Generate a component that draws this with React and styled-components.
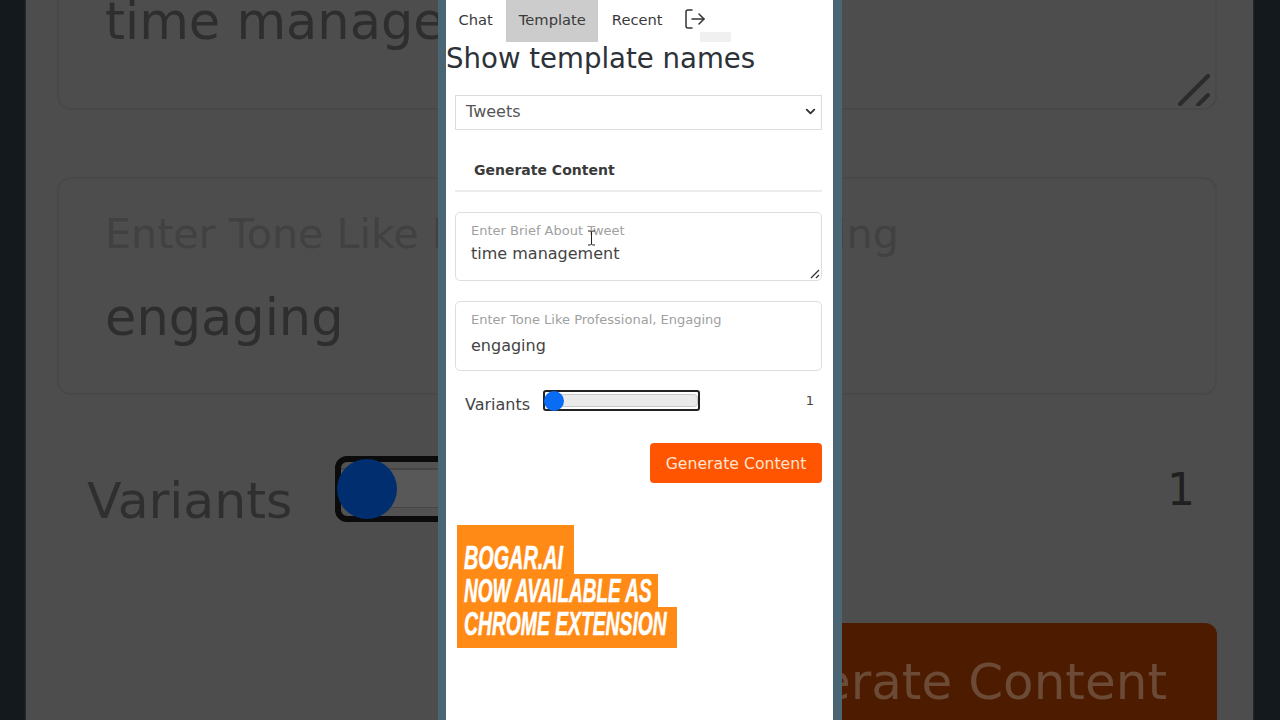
import React from 'react'
import styled, { createGlobalStyle } from 'styled-components'
import { ChevronDown, LogOut } from 'lucide-react'

const GlobalStyle = createGlobalStyle`
  html, body {
    margin: 0;
    height: 100%;
    background: #13191c;
    font-family: "DejaVu Sans", Inter, sans-serif;
  }
  * { box-sizing: border-box; }
`

const App = () => {
  return (
    <Screen>
      <GlobalStyle />
      <Backdrop>
        <GhostCard $top>
          <GhostValue $first>time management</GhostValue>
          <GhostGrip width="32" height="32" viewBox="0 0 32 32">
            <path d="M2 30 L30 2" />
            <path d="M20 31 L30 21" />
          </GhostGrip>
        </GhostCard>
        <GhostCard>
          <GhostLabel>Enter Tone Like Professional, Engaging</GhostLabel>
          <GhostValue>engaging</GhostValue>
        </GhostCard>
        <GhostRow>
          <GhostVariants>Variants</GhostVariants>
          <GhostSlider>
            <GhostThumb />
          </GhostSlider>
          <GhostCount>1</GhostCount>
        </GhostRow>
        <GhostButton>Generate Content</GhostButton>
      </Backdrop>

      <Phone>
        <Nav>
          <Tab>Chat</Tab>
          <Tab $active>Template</Tab>
          <Tab>Recent</Tab>
          <LogoutIcon size={24} strokeWidth={1.5} />
          <Smudge />
        </Nav>
        <Title>Show template names</Title>
        <Select>
          Tweets
          <ChevronDown size={15} strokeWidth={3} color="#333" />
        </Select>
        <SectionHead>Generate Content</SectionHead>
        <Field $height={69}>
          <FieldLabel>Enter Brief About Tweet</FieldLabel>
          <FieldValue>time management</FieldValue>
          <Grip width="10" height="10" viewBox="0 0 10 10">
            <path d="M1 9 L9 1" />
            <path d="M6 9 L9 6" />
          </Grip>
          <TextCursor width="9" height="16" viewBox="0 0 9 16">
            <path d="M1 1 H3.5 L4.5 2 L5.5 1 H8 M4.5 2 V14 M1 15 H3.5 L4.5 14 L5.5 15 H8" />
          </TextCursor>
        </Field>
        <Field $height={70}>
          <FieldLabel>Enter Tone Like Professional, Engaging</FieldLabel>
          <FieldValue $spaced>engaging</FieldValue>
        </Field>
        <SliderRow>
          <VariantsLabel>Variants</VariantsLabel>
          <Slider>
            <SliderTrack />
            <SliderThumb />
          </Slider>
          <Count>1</Count>
        </SliderRow>
        <Actions>
          <GenerateButton>Generate Content</GenerateButton>
        </Actions>
        <Banner>
          <BannerLine $width={117} $top={16} $scale={0.6}><span>BOGAR.AI</span></BannerLine>
          <BannerLine $width={201} $scale={0.575}><span>NOW AVAILABLE AS</span></BannerLine>
          <BannerLine $width={220} $bottom={8} $scale={0.585}><span>CHROME EXTENSION</span></BannerLine>
        </Banner>
      </Phone>
    </Screen>
  )
}

export default App

const Screen = styled.div`
  position: relative;
  width: 1280px;
  height: 720px;
  overflow: hidden;
  display: flex;
  justify-content: center;
  background: #13191c;
`

/* enlarged, dimmed copy of the form that sits behind the phone */
const Backdrop = styled.div`
  position: absolute;
  top: 0;
  bottom: 0;
  left: 26px;
  right: 27px;
  padding: 0 36px 0 31px;
  background: #4d4d4d;
  box-shadow: 0 0 2px #4d4d4d;
`
const GhostCard = styled.div`
  position: relative;
  height: ${p => (p.$top ? '220px' : '218px')};
  margin-top: ${p => (p.$top ? '-110px' : '67px')};
  padding: ${p => (p.$top ? '108px' : '31px')} 46px 0;
  border: 2px solid #484848;
  border-radius: 14px;
`
const GhostLabel = styled.div`
  font-size: 41.2px;
  line-height: 48px;
  color: #414141;
  white-space: nowrap;
`
const GhostValue = styled.div`
  margin-top: ${p => (p.$first ? '-3px' : '35px')};
  font-size: 51px;
  line-height: 50px;
  color: #2e2e2e;
  white-space: nowrap;
`
const GhostGrip = styled.svg`
  position: absolute;
  right: 5px;
  bottom: 2px;
  fill: none;
  stroke: #2b2b2b;
  stroke-width: 4;
  stroke-linecap: round;
`
const GhostRow = styled.div`
  display: flex;
  align-items: center;
  height: 66px;
  margin-top: 61px;
  padding: 0 22px 0 30px;
`
const GhostVariants = styled.div`
  width: 248px;
  font-size: 50.5px;
  color: #2f2f2f;
  padding-top: 22px;
  white-space: nowrap;
`
const GhostSlider = styled.div`
  width: 500px;
  height: 66px;
  border: 6px solid #0b0b0b;
  border-radius: 12px;
  background: linear-gradient(#525252 0 12%, #454545 12% 14%, #585858 14% 84%, #454545 84% 86%, #525252 86%);
`
const GhostThumb = styled.div`
  width: 60px;
  height: 60px;
  margin: -3px 0 0 -4px;
  border-radius: 50%;
  background: #002e6e;
`
const GhostCount = styled.div`
  margin-left: auto;
  font-size: 44px;
  color: #202020;
`
const GhostButton = styled.div`
  width: 540px;
  height: 130px;
  margin: 101px 0 0 auto;
  padding: 30px 50px 0 0;
  border-radius: 12px;
  background: #4d1b00;
  color: #6b4b36;
  font-size: 50px;
  text-align: right;
  white-space: nowrap;
`

const Phone = styled.div`
  position: relative;
  width: 404px;
  height: 720px;
  background: #fff;
  border-left: 8px solid #4a6675;
  border-right: 9px solid #4a6675;
  color: #444;
`
const Nav = styled.nav`
  position: relative;
  display: flex;
  align-items: center;
  height: 42px;
`
const Tab = styled.div`
  display: flex;
  align-items: center;
  height: 42px;
  padding: 0 12.5px 4px;
  margin-right: 1px;
  font-size: 14.7px;
  color: #3a3a3a;
  background: ${p => (p.$active ? '#cccccc' : 'transparent')};
`
const LogoutIcon = styled(LogOut)`
  margin-left: 7px;
  margin-top: -4px;
  color: #333;
`
const Smudge = styled.div`
  position: absolute;
  left: 254px;
  top: 32px;
  width: 31px;
  height: 10px;
  background: #f0f0f0;
`
const Title = styled.h1`
  margin: 0;
  height: 52px;
  font-size: 27.6px;
  line-height: 34px;
  font-weight: 400;
  color: #2c3238;
  white-space: nowrap;
`
const Select = styled.div`
  display: flex;
  align-items: center;
  justify-content: space-between;
  width: 367px;
  height: 35px;
  margin: 1px 0 0 9px;
  padding: 0 3px 2px 10px;
  border: 1px solid #dcdcdc;
  font-size: 16px;
  color: #555;
`
const SectionHead = styled.h2`
  width: 367px;
  height: 62px;
  margin: 0 0 0 9px;
  padding: 30px 0 0 19px;
  border-bottom: 2px solid #ececec;
  font-size: 14px;
  line-height: 20px;
  font-weight: 700;
  color: #3a3a3a;
`
const Field = styled.div`
  position: relative;
  width: 367px;
  height: ${p => p.$height}px;
  margin: 20px 0 0 9px;
  padding: 10px 15px 0;
  border: 1px solid #dedede;
  border-radius: 5px;
`
const FieldLabel = styled.div`
  font-size: 13px;
  line-height: 16px;
  color: #a0a0a0;
  white-space: nowrap;
`
const FieldValue = styled.div`
  margin-top: ${p => (p.$spaced ? '7px' : '4px')};
  font-size: 16px;
  line-height: 22px;
  color: #444;
`
const Grip = styled.svg`
  position: absolute;
  right: 1px;
  bottom: 1px;
  fill: none;
  stroke: #333;
  stroke-width: 1.2;
`
const TextCursor = styled.svg`
  position: absolute;
  left: 131px;
  top: 17px;
  fill: none;
  stroke: #222;
  stroke-width: 1;
`
const SliderRow = styled.div`
  display: flex;
  align-items: center;
  width: 367px;
  height: 21px;
  margin: 19px 0 0 9px;
  padding: 0 8px 0 10px;
`
const VariantsLabel = styled.div`
  width: 78px;
  padding-top: 7px;
  font-size: 16px;
  color: #444;
  white-space: nowrap;
`
const Slider = styled.div`
  position: relative;
  width: 157px;
  height: 21px;
  border: 2px solid #222;
  border-radius: 3px;
  background: #fff;
`
const SliderTrack = styled.div`
  height: 13px;
  margin: 2px 0 0 2px;
  border: 1px solid #c9c9c9;
  border-radius: 4px;
  background: #eaeaea;
`
const SliderThumb = styled.div`
  position: absolute;
  top: -1px;
  left: -1px;
  width: 20px;
  height: 20px;
  border-radius: 50%;
  background: #0a6cf5;
`
const Count = styled.div`
  margin-left: auto;
  font-size: 13px;
  color: #444;
`
const Actions = styled.div`
  display: flex;
  justify-content: flex-end;
  width: 367px;
  margin: 32px 0 0 9px;
`
const GenerateButton = styled.div`
  display: flex;
  align-items: center;
  justify-content: center;
  width: 172px;
  height: 40px;
  border-radius: 4px;
  background: #ff5500;
  color: #fde3d0;
  font-size: 15.7px;
  white-space: nowrap;
`
const Banner = styled.div`
  display: flex;
  flex-direction: column;
  align-items: flex-start;
  margin: 42px 0 0 11px;
`
const BannerLine = styled.div`
  width: ${p => p.$width}px;
  padding: ${p => p.$top || 0}px 0 ${p => p.$bottom || 0}px 7px;
  background: #ff8a16;
  color: #fff;
  font-family: "Liberation Sans", sans-serif;
  font-size: 33px;
  line-height: 33px;
  font-weight: 700;
  font-style: italic;
  white-space: nowrap;
  -webkit-text-stroke: 0.6px #fff;

  & span {
    display: inline-block;
    transform: scaleX(${p => p.$scale});
    transform-origin: left center;
  }
`
